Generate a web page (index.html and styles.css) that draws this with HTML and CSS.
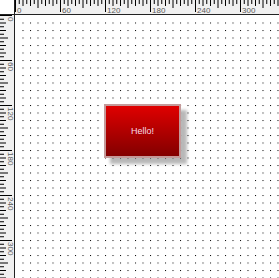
FILE: index.html
```html
<!DOCTYPE html>
<html>
<head>
<meta charset="utf-8">
<link rel="stylesheet" href="styles.css">
</head>
<body>
<div class="app">
  <div class="corner"></div>
  <div class="ruler ruler-top">
    <svg width="264" height="14" viewBox="0 0 352 18.667">
      <defs>
        <pattern id="tt" width="60" height="18.667" patternUnits="userSpaceOnUse">
          <rect x="0" y="0" width="1.333" height="16" fill="#000"/>
          <rect x="5" y="0" width="1.333" height="5.333" fill="#000"/>
          <rect x="10" y="0" width="1.333" height="8" fill="#000"/>
          <rect x="15" y="0" width="1.333" height="5.333" fill="#000"/>
          <rect x="20" y="0" width="1.333" height="8" fill="#000"/>
          <rect x="25" y="0" width="1.333" height="5.333" fill="#000"/>
          <rect x="30" y="0" width="1.333" height="10.667" fill="#000"/>
          <rect x="35" y="0" width="1.333" height="5.333" fill="#000"/>
          <rect x="40" y="0" width="1.333" height="8" fill="#000"/>
          <rect x="45" y="0" width="1.333" height="5.333" fill="#000"/>
          <rect x="50" y="0" width="1.333" height="8" fill="#000"/>
          <rect x="55" y="0" width="1.333" height="5.333" fill="#000"/>
        </pattern>
      </defs>
      <rect width="352" height="18.667" fill="url(#tt)"/>
      <g class="lbl">
        <text x="2.667" y="17.333">0</text>
        <text x="62.667" y="17.333">60</text>
        <text x="122.667" y="17.333">120</text>
        <text x="182.667" y="17.333">180</text>
        <text x="242.667" y="17.333">240</text>
        <text x="302.667" y="17.333">300</text>
      </g>
    </svg>
  </div>
  <div class="ruler ruler-left">
    <svg width="14" height="263" viewBox="0 0 18.667 350.667">
      <defs>
        <pattern id="tl" width="18.667" height="60" patternUnits="userSpaceOnUse">
          <rect y="0" x="0" height="1.333" width="16" fill="#000"/>
          <rect y="5" x="0" height="1.333" width="5.333" fill="#000"/>
          <rect y="10" x="0" height="1.333" width="8" fill="#000"/>
          <rect y="15" x="0" height="1.333" width="5.333" fill="#000"/>
          <rect y="20" x="0" height="1.333" width="8" fill="#000"/>
          <rect y="25" x="0" height="1.333" width="5.333" fill="#000"/>
          <rect y="30" x="0" height="1.333" width="10.667" fill="#000"/>
          <rect y="35" x="0" height="1.333" width="5.333" fill="#000"/>
          <rect y="40" x="0" height="1.333" width="8" fill="#000"/>
          <rect y="45" x="0" height="1.333" width="5.333" fill="#000"/>
          <rect y="50" x="0" height="1.333" width="8" fill="#000"/>
          <rect y="55" x="0" height="1.333" width="5.333" fill="#000"/>
        </pattern>
      </defs>
      <rect width="18.667" height="350.667" fill="url(#tl)"/>
      <g class="lbl">
        <text transform="translate(10.667 2.667) rotate(90)">0</text>
        <text transform="translate(10.667 62.667) rotate(90)">60</text>
        <text transform="translate(10.667 122.667) rotate(90)">120</text>
        <text transform="translate(10.667 182.667) rotate(90)">180</text>
        <text transform="translate(10.667 242.667) rotate(90)">240</text>
        <text transform="translate(10.667 302.667) rotate(90)">300</text>
      </g>
    </svg>
  </div>
  <div class="canvas">
    <svg class="grid" width="264" height="263" viewBox="0 0 352 350.667">
      <defs>
        <pattern id="dots" width="10" height="10" patternUnits="userSpaceOnUse">
          <rect x="0" y="0" width="1.333" height="1.333" fill="#000"/>
        </pattern>
      </defs>
      <rect x="5" y="5" width="347" height="345.667" fill="url(#dots)"/>
    </svg>
    <div class="node">Hello!</div>
  </div>
</div>
</body>
</html>
```
FILE: styles.css
```css
html, body {
  margin: 0;
  padding: 0;
  background: #fff;
}
.app {
  width: 279px;
  height: 278px;
  display: grid;
  grid-template-columns: 15px 264px;
  grid-template-rows: 15px 263px;
  overflow: hidden;
}
.corner {
  background: #fff;
  border-right: 1px solid #222;
  border-bottom: 1px solid #222;
  box-sizing: border-box;
}
.ruler {
  background: #f0f0f0;
  box-sizing: border-box;
  overflow: hidden;
}
.ruler svg {
  display: block;
}
.ruler-top {
  border-bottom: 1px solid #222;
}
.ruler-left {
  border-right: 1px solid #222;
}
.lbl text {
  font-family: "Liberation Sans", Arial, sans-serif;
  font-size: 10.667px;
  fill: #5a5a5a;
}
.canvas {
  position: relative;
  background: #fff;
  overflow: hidden;
}
.grid {
  display: block;
}
.node {
  position: absolute;
  left: 89px;
  top: 89px;
  width: 77px;
  height: 54px;
  box-sizing: border-box;
  border: 2px solid #c49a9a;
  background: linear-gradient(#e00000, #820000);
  box-shadow: 6px 6px 3px rgba(0, 0, 0, 0.28);
  display: flex;
  align-items: center;
  justify-content: center;
  font-family: "Liberation Sans", Arial, sans-serif;
  font-size: 9px;
  color: #f5dbe8;
}
```
